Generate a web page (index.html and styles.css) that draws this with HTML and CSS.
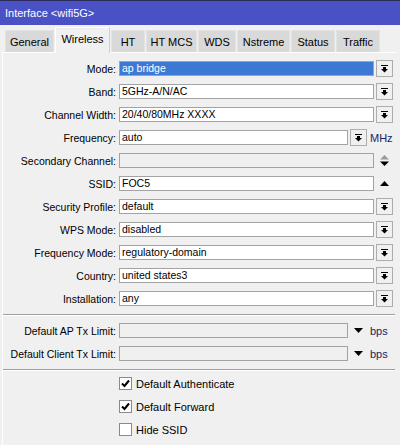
FILE: index.html
```html
<!DOCTYPE html>
<html>
<head>
<meta charset="utf-8">
<link rel="stylesheet" href="styles.css">
</head>
<body>
<div class="window">
  <div class="title">Interface &lt;wifi5G&gt;</div>
  <div class="tabs">
    <div class="tab t-general">General</div>
    <div class="tab active t-wireless">Wireless</div>
    <div class="tab t-ht">HT</div>
    <div class="tab t-htmcs">HT MCS</div>
    <div class="tab t-wds">WDS</div>
    <div class="tab t-nstreme">Nstreme</div>
    <div class="tab t-status">Status</div>
    <div class="tab t-traffic">Traffic</div>
  </div>
  <div class="panel">
    <div class="group">
      <div class="row"><div class="label">Mode:</div><div class="field selected">ap bridge</div><div class="btn"><svg width="7" height="8" viewBox="0 0 7 8"><rect x="0" y="0" width="7" height="1"/><rect x="2" y="2" width="3" height="2"/><polygon points="0,4 7,4 3.5,7.5"/></svg></div></div>
      <div class="row"><div class="label">Band:</div><div class="field">5GHz-A/N/AC</div><div class="btn"><svg width="7" height="8" viewBox="0 0 7 8"><rect x="0" y="0" width="7" height="1"/><rect x="2" y="2" width="3" height="2"/><polygon points="0,4 7,4 3.5,7.5"/></svg></div></div>
      <div class="row"><div class="label">Channel Width:</div><div class="field">20/40/80MHz XXXX</div><div class="btn"><svg width="7" height="8" viewBox="0 0 7 8"><rect x="0" y="0" width="7" height="1"/><rect x="2" y="2" width="3" height="2"/><polygon points="0,4 7,4 3.5,7.5"/></svg></div></div>
      <div class="row"><div class="label">Frequency:</div><div class="field short">auto</div><div class="btn"><svg width="7" height="8" viewBox="0 0 7 8"><rect x="0" y="0" width="7" height="1"/><rect x="2" y="2" width="3" height="2"/><polygon points="0,4 7,4 3.5,7.5"/></svg></div><div class="unit">MHz</div></div>
      <div class="row"><div class="label">Secondary Channel:</div><div class="field disabled"></div><div class="icon"><svg width="9" height="11" viewBox="0 0 9 11"><polygon points="0,4.5 9,4.5 4.5,0" fill="#9a9a9a"/><polygon points="0,6.5 9,6.5 4.5,11" fill="#000"/></svg></div></div>
      <div class="row"><div class="label">SSID:</div><div class="field">FOC5</div><div class="icon"><svg width="9" height="5" viewBox="0 0 9 5"><polygon points="0,5 9,5 4.5,0"/></svg></div></div>
      <div class="row"><div class="label">Security Profile:</div><div class="field">default</div><div class="btn"><svg width="7" height="8" viewBox="0 0 7 8"><rect x="0" y="0" width="7" height="1"/><rect x="2" y="2" width="3" height="2"/><polygon points="0,4 7,4 3.5,7.5"/></svg></div></div>
      <div class="row"><div class="label">WPS Mode:</div><div class="field">disabled</div><div class="btn"><svg width="7" height="8" viewBox="0 0 7 8"><rect x="0" y="0" width="7" height="1"/><rect x="2" y="2" width="3" height="2"/><polygon points="0,4 7,4 3.5,7.5"/></svg></div></div>
      <div class="row"><div class="label">Frequency Mode:</div><div class="field">regulatory-domain</div><div class="btn"><svg width="7" height="8" viewBox="0 0 7 8"><rect x="0" y="0" width="7" height="1"/><rect x="2" y="2" width="3" height="2"/><polygon points="0,4 7,4 3.5,7.5"/></svg></div></div>
      <div class="row"><div class="label">Country:</div><div class="field">united states3</div><div class="btn"><svg width="7" height="8" viewBox="0 0 7 8"><rect x="0" y="0" width="7" height="1"/><rect x="2" y="2" width="3" height="2"/><polygon points="0,4 7,4 3.5,7.5"/></svg></div></div>
      <div class="row"><div class="label">Installation:</div><div class="field">any</div><div class="btn"><svg width="7" height="8" viewBox="0 0 7 8"><rect x="0" y="0" width="7" height="1"/><rect x="2" y="2" width="3" height="2"/><polygon points="0,4 7,4 3.5,7.5"/></svg></div></div>
    </div>
    <div class="sep"></div>
    <div class="group">
      <div class="row"><div class="label">Default AP Tx Limit:</div><div class="field short disabled"></div><div class="tri"><svg width="9" height="5" viewBox="0 0 9 5"><polygon points="0,0 9,0 4.5,5"/></svg></div><div class="unit">bps</div></div>
      <div class="row"><div class="label">Default Client Tx Limit:</div><div class="field short disabled"></div><div class="tri"><svg width="9" height="5" viewBox="0 0 9 5"><polygon points="0,0 9,0 4.5,5"/></svg></div><div class="unit">bps</div></div>
    </div>
    <div class="sep"></div>
    <div class="checks">
      <div class="check"><div class="box"><svg width="9" height="9" viewBox="0 0 9 9"><path d="M1 4.5 L3.5 7 L8 1.5" fill="none" stroke="#000" stroke-width="2"/></svg></div><span>Default Authenticate</span></div>
      <div class="check"><div class="box"><svg width="9" height="9" viewBox="0 0 9 9"><path d="M1 4.5 L3.5 7 L8 1.5" fill="none" stroke="#000" stroke-width="2"/></svg></div><span>Default Forward</span></div>
      <div class="check"><div class="box"></div><span>Hide SSID</span></div>
    </div>
  </div>
</div>
</body>
</html>
```
FILE: styles.css
```css
html, body {
  margin: 0;
  padding: 0;
  background: #f0f0f0;
}
body {
  width: 400px;
  height: 445px;
  overflow: hidden;
  font-family: "Liberation Sans", Arial, sans-serif;
  font-size: 10.5px;
  color: #000;
}
.window {
  width: 400px;
  height: 445px;
  display: flex;
  flex-direction: column;
}
.title {
  height: 24px;
  border-top: 1px solid #2c2c5a;
  background: #4a51c4;
  color: #fff;
  font-size: 11px;
  line-height: 24px;
  padding-left: 5px;
  box-sizing: content-box;
}
.tabs {
  height: 27px;
  display: flex;
  align-items: flex-end;
  padding-left: 5px;
  gap: 1px;
  position: relative;
  z-index: 1;
}
.tab {
  height: 21px;
  background: #d9d9d9;
  border: 1px solid #e3e3e3;
  border-bottom: none;
  box-sizing: content-box;
  display: flex;
  align-items: center;
  justify-content: center;
  font-size: 11px;
  margin-bottom: 0;
}
.tab.active {
  height: 25px;
  background: #f0f0f0;
  border-color: #ffffff;
  border-right-color: #d0d0d0;
  margin-bottom: -1px;
  align-items: flex-start;
  padding-top: 0;
  line-height: 22px;
}
.t-general { width: 47px; }
.t-wireless { width: 53px; }
.t-ht { width: 32px; }
.t-htmcs { width: 49px; }
.t-wds { width: 36px; }
.t-nstreme { width: 51px; }
.t-status { width: 42px; }
.t-traffic { width: 42px; }
.panel {
  flex: 1;
  margin-left: 2px;
  margin-right: 3px;
  border-top: 1px solid #ffffff;
  border-left: 1px solid #ffffff;
  padding-top: 8px;
}
.group {
  display: flex;
  flex-direction: column;
  gap: 8px;
}
.row {
  height: 15px;
  display: flex;
  align-items: center;
}
.label {
  width: 113px;
  text-align: right;
  padding-right: 3px;
  white-space: nowrap;
  flex: none;
}
.field {
  width: 255px;
  height: 15px;
  box-sizing: border-box;
  border: 1px solid #a3a3a3;
  background: #fff;
  padding-left: 2px;
  line-height: 13px;
  white-space: nowrap;
  flex: none;
}
.field.short {
  width: 229px;
}
.field.selected {
  background: #3e78d5;
  color: #fff;
  border-color: #a3a3a3;
}
.field.disabled {
  background: #f0f0f0;
}
.btn {
  width: 17px;
  height: 17px;
  box-sizing: border-box;
  border: 1px solid #adadad;
  background: #f0f0f0;
  margin-left: 2px;
  display: flex;
  align-items: center;
  justify-content: center;
  flex: none;
}
.icon {
  width: 17px;
  margin-left: 2px;
  display: flex;
  justify-content: center;
  flex: none;
}
.tri {
  width: 17px;
  margin-left: 2px;
  display: flex;
  justify-content: center;
  flex: none;
}
.unit {
  margin-left: 3px;
  color: #1b2460;
  font-size: 11px;
}
.sep {
  margin: 8px 2px 7px 0;
  height: 0;
  border-top: 1px solid #a0a0a0;
  border-bottom: 1px solid #ffffff;
}
.checks {
  display: flex;
  flex-direction: column;
  gap: 10px;
  padding-left: 116px;
  padding-top: 0;
  margin-top: -1px;
}
.check {
  height: 13px;
  display: flex;
  align-items: center;
  gap: 4px;
}
.box {
  width: 13px;
  height: 13px;
  box-sizing: border-box;
  border: 1px solid #8a8a8a;
  background: #fff;
  display: flex;
  align-items: center;
  justify-content: center;
}
.check span {
  font-size: 11px;
}
```
